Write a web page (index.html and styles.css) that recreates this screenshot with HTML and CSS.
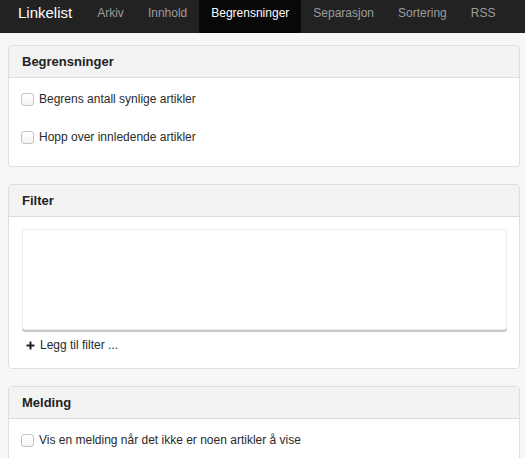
FILE: index.html
```html
<!DOCTYPE html>
<html lang="no">
<head>
<meta charset="utf-8">
<title>Linkelist</title>
<link rel="stylesheet" href="styles.css">
</head>
<body>
<nav class="navbar">
  <span class="brand">Linkelist</span>
  <a class="nav-link">Arkiv</a>
  <a class="nav-link">Innhold</a>
  <a class="nav-link active">Begrensninger</a>
  <a class="nav-link">Separasjon</a>
  <a class="nav-link">Sortering</a>
  <a class="nav-link">RSS</a>
</nav>
<main class="content">
  <section class="panel">
    <div class="panel-heading">Begrensninger</div>
    <div class="panel-body">
      <label class="check"><input type="checkbox"><span>Begrens antall synlige artikler</span></label>
      <label class="check"><input type="checkbox"><span>Hopp over innledende artikler</span></label>
    </div>
  </section>
  <section class="panel">
    <div class="panel-heading">Filter</div>
    <div class="panel-body filter-body">
      <div class="filter-box"></div>
      <div class="add-filter">
        <svg class="plus" width="9" height="9" viewBox="0 0 9 9"><path d="M4.5 0.5V8.5M0.5 4.5H8.5" stroke="#222" stroke-width="2" fill="none"/></svg>
        <span>Legg til filter ...</span>
      </div>
    </div>
  </section>
  <section class="panel">
    <div class="panel-heading">Melding</div>
    <div class="panel-body">
      <label class="check"><input type="checkbox"><span>Vis en melding når det ikke er noen artikler å vise</span></label>
    </div>
  </section>
</main>
</body>
</html>
```
FILE: styles.css
```css
html, body {
  margin: 0;
  padding: 0;
}
body {
  background: #f7f7f7;
  font-family: "Liberation Sans", Arial, Helvetica, sans-serif;
  font-size: 12px;
  color: #333;
}
.navbar {
  display: flex;
  align-items: stretch;
  height: 33px;
  background: #222;
}
.brand {
  margin-left: 18px;
  margin-right: 13px;
  padding-top: 5px;
  line-height: 16px;
  font-size: 15px;
  color: #fff;
}
.nav-link {
  padding: 5px 12px 0;
  line-height: 16px;
  font-size: 12px;
  color: #9d9d9d;
}
.nav-link.active {
  background: #080808;
  color: #fff;
}
.content {
  padding: 12px 5px 0 8px;
}
.panel {
  background: #fff;
  border: 1px solid #dedede;
  border-radius: 4px;
  margin-bottom: 17px;
  overflow: hidden;
}
.panel-heading {
  height: 31px;
  line-height: 31px;
  padding-left: 13px;
  background: #f3f3f3;
  border-bottom: 1px solid #dcdcdc;
  font-size: 13px;
  font-weight: bold;
  color: #222;
}
.panel-body {
  padding: 12px 12px 12px 12px;
}
.check {
  display: flex;
  align-items: center;
  height: 18px;
  margin-bottom: 20px;
  color: #2a2a2a;
}
.check:last-child {
  margin-bottom: 8px;
}
.check input {
  -webkit-appearance: none;
  appearance: none;
  width: 13px;
  height: 13px;
  margin: 0 5px 0 0;
  border: 1px solid #c4c4c4;
  border-radius: 3px;
  background: linear-gradient(#fff, #f4f4f4);
  box-sizing: border-box;
}
.filter-body {
  padding: 12px 12px 14px 13px;
}
.filter-box {
  height: 101px;
  border: 1px solid #ececec;
  border-radius: 3px;
  box-shadow: 0 2px 0 #c8c8c8;
  box-sizing: border-box;
  background: #fff;
}
.add-filter {
  display: flex;
  align-items: center;
  height: 18px;
  margin-top: 6px;
  padding-left: 4px;
  color: #2a2a2a;
}
.plus {
  margin-right: 5px;
}
```
